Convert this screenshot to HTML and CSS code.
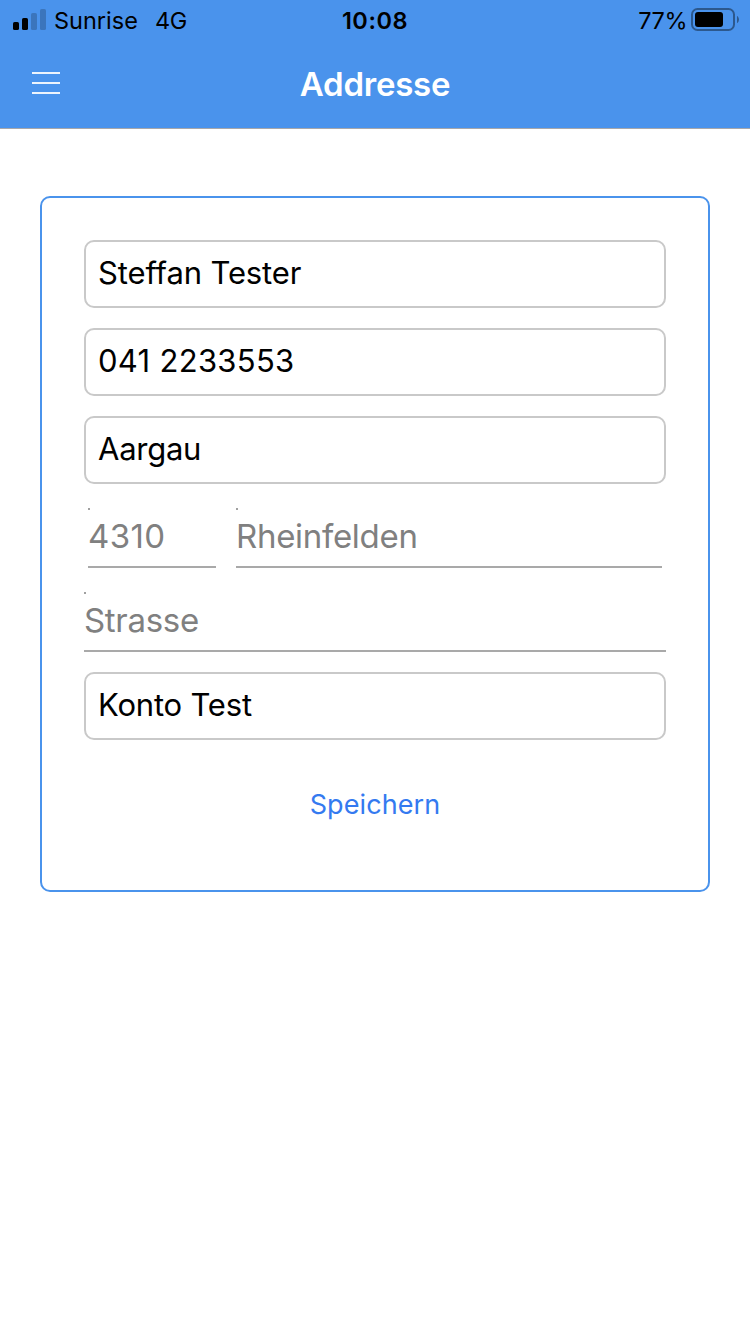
FILE: index.html
```html
<!DOCTYPE html>
<html lang="de">
<head>
<meta charset="utf-8">
<title>Addresse</title>
<link rel="stylesheet" href="styles.css">
</head>
<body>
<header class="header">
  <div class="status">
    <div class="status-left">
      <svg class="signal" width="34" height="22" viewBox="0 0 34 22">
        <rect x="0" y="13" width="6" height="8" rx="1.6"/>
        <rect x="9" y="9" width="6" height="12" rx="1.6"/>
        <rect x="18" y="4" width="6" height="17" rx="1.6" opacity=".2"/>
        <rect x="27" y="0" width="6" height="21" rx="1.6" opacity=".2"/>
      </svg>
      <span class="carrier">Sunrise</span>
      <span class="network">4G</span>
    </div>
    <span class="time">10:08</span>
    <div class="status-right">
      <span class="percent">77%</span>
      <svg class="battery" width="48" height="24" viewBox="0 0 48 24">
        <rect x="1" y="1" width="42" height="21" rx="5.5" fill="none" stroke="#000" stroke-width="2" opacity=".4"/>
        <rect x="4" y="4" width="28" height="15" rx="3"/>
        <path d="M46 8c2.600 1.200 2.600 6 0 7.200z" opacity=".4"/>
      </svg>
    </div>
  </div>
  <nav class="navbar">
    <svg class="menu" width="28" height="24" viewBox="0 0 28 24">
      <path d="M0 2h28M0 12h28M0 22h28" stroke="#fff" stroke-width="2" opacity=".9"/>
    </svg>
    <h1 class="title">Addresse</h1>
  </nav>
</header>
<main class="page">
  <form class="card">
    <div class="box"><span class="name">Steffan Tester</span></div>
    <div class="box"><span class="phone">041 2233553</span></div>
    <div class="box"><span class="canton">Aargau</span></div>
    <div class="row">
      <div class="line zip"><span class="zip-text">4310</span></div>
      <div class="line city"><span class="city-text">Rheinfelden</span></div>
    </div>
    <div class="line street"><span class="street-text">Strasse</span></div>
    <div class="box"><span class="account">Konto Test</span></div>
    <div class="save"><span class="save-text">Speichern</span></div>
  </form>
</main>
</body>
</html>
```
FILE: styles.css
```css
* { box-sizing: border-box; }
body {
  margin: 0;
  background: #fff;
  color: #000;
  font-family: Inter, "Liberation Sans", sans-serif;
  height: 1334px;
}
svg { display: block; flex: none; }
span { white-space: nowrap; }
.header {
  height: 129px;
  background: #4a93ec;
  border-bottom: 1px solid #a7a7aa;
}
.status {
  display: grid;
  grid-template-columns: 1fr auto 1fr;
  height: 40px;
  font-size: 23.5px;
  line-height: 42px;
}
.status-left { display: flex; padding-left: 13px; }
.signal { margin-top: 9px; }
.carrier { margin-left: 7px; letter-spacing: 0; }
.network { margin-left: 17px; letter-spacing: -.2px; }
.time { font-weight: 600; letter-spacing: .55px; }
.percent { letter-spacing: -.5px; }
.status-right { display: flex; justify-content: flex-end; padding-right: 11px; }
.battery { margin: 8px 0 0 4px; }
.navbar {
  display: grid;
  grid-template-columns: 1fr auto 1fr;
  height: 88px;
  padding-left: 32px;
  padding-right: 32px;
}
.menu { margin-top: 31px; }
.title {
  margin: 0;
  color: #fff;
  font-size: 33px;
  font-weight: 600;
  line-height: 88px;
  letter-spacing: -.25px;
}
.page { padding: 67px 40px 0; }
.card {
  display: flex;
  flex-direction: column;
  height: 696px;
  padding: 42px;
  border: 2px solid #4a93ec;
  border-radius: 10px;
}
.box {
  height: 68px;
  margin-bottom: 20px;
  padding-left: 12px;
  border: 2px solid #c9c9c9;
  border-radius: 10px;
  font-size: 31px;
  line-height: 62px;
}
.name { letter-spacing: -.13px; }
.phone { letter-spacing: .3px; }
.canton { letter-spacing: -.25px; }
.account { letter-spacing: -.2px; }
.row { display: flex; gap: 20px; padding: 0 4px; }
.line {
  height: 60px;
  margin: 4px 0 20px;
  border-bottom: 2px solid #a9a9a9;
  color: #808080;
  font-size: 33px;
  line-height: 57px;
}
.line::before {
  content: "";
  display: block;
  width: 2px;
  height: 2px;
  margin-bottom: -2px;
  background: #a0a0a0;
}
.zip { width: 128px; }
.city { flex: 1; }
.zip-text { letter-spacing: .4px; }
.city-text { letter-spacing: -.3px; }
.street-text { letter-spacing: -.3px; }
.street { margin-top: 4px; }
.save {
  margin-top: 20px;
  color: #347af0;
  font-size: 27px;
  line-height: 50px;
  text-align: center;
}
.save-text { letter-spacing: .1px; }
```
